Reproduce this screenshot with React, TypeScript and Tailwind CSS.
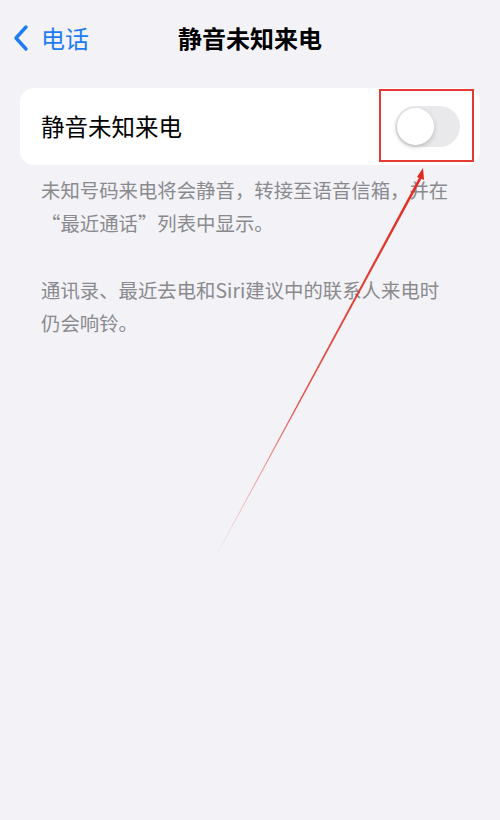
import React from "react";

const font = { fontFamily: '"Noto Sans CJK SC", "Noto Sans", sans-serif' };

export default function App() {
  return (
    <div className="relative w-[500px] h-[820px] bg-[#f2f2f7] overflow-hidden" style={font}>
      {/* nav bar */}
      <div className="relative h-[76px] flex items-center">
        <div className="flex items-center pl-[12px] text-[#1d7cf2]">
          <svg width="18" height="28" viewBox="0 0 18 28" className="mb-[1px]">
            <path d="M14 3 L4 14 L14 25" fill="none" stroke="#1d7cf2" strokeWidth="3.4" strokeLinecap="round" strokeLinejoin="round" />
          </svg>
          <span className="ml-[11px] text-[24px] leading-none">电话</span>
        </div>
        <div className="absolute left-0 right-0 text-center text-[24px] font-bold text-black leading-none">
          静音未知来电
        </div>
      </div>

      {/* card */}
      <div className="mx-[20px] mt-[12px] h-[77px] rounded-[14px] bg-white flex items-center justify-between pl-[21px] pr-[20px]">
        <span className="text-[23.5px] text-black">静音未知来电</span>
        <div className="relative w-[65px] h-[41px] rounded-full bg-[#e9e9eb]">
          <div className="absolute left-[2px] top-[2px] w-[37px] h-[37px] rounded-full bg-white shadow-[0_2px_5px_rgba(0,0,0,0.2)]" />
        </div>
      </div>

      {/* footer */}
      <div className="pl-[41px] pr-[10px] pt-[8px] text-[19.4px] leading-[33px] text-[#8a8a8e] whitespace-nowrap">
        <p>
          未知号码来电将会静音，转接至语音信箱，并在
          <br />
          “最近通话”列表中显示。
        </p>
        <p className="mt-[34px]">
          通讯录、最近去电和Siri建议中的联系人来电时
          <br />
          仍会响铃。
        </p>
      </div>

      {/* annotation overlay */}
      <div className="absolute left-[379px] top-[89px] w-[95px] h-[73px] border-2 border-solid border-[#e53935]" />
      <svg className="absolute left-0 top-0 pointer-events-none" width="500" height="820">
        <defs>
          <linearGradient id="fade" x1="422" y1="172" x2="218" y2="552" gradientUnits="userSpaceOnUse">
            <stop offset="0" stopColor="#e02a1f" stopOpacity="1" />
            <stop offset="0.6" stopColor="#e02a1f" stopOpacity="0.8" />
            <stop offset="1" stopColor="#e02a1f" stopOpacity="0.05" />
          </linearGradient>
        </defs>
        <polygon points="421,174 423.5,175 218.5,552 217.8,552" fill="url(#fade)" />
        <polygon points="423,168 424,180 417,177" fill="#e02a1f" />
      </svg>
    </div>
  );
}
